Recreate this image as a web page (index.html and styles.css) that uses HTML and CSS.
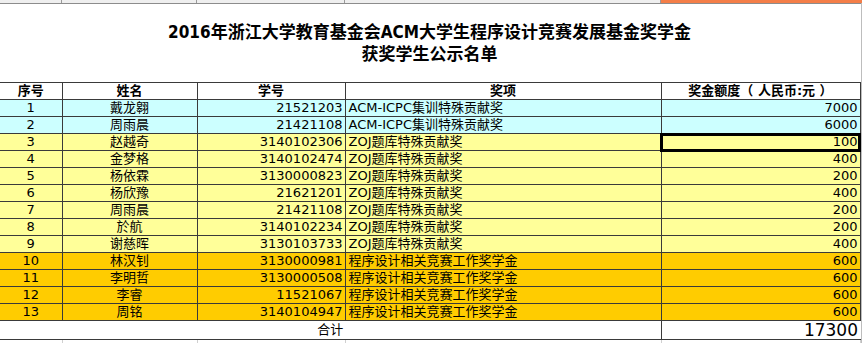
FILE: index.html
```html
<!DOCTYPE html>
<html>
<head>
<meta charset="utf-8">
<link rel="stylesheet" href="styles.css">
</head>
<body>
<div class="sheet">
  <div class="strip">
    <div class="sc"></div><div class="sc"></div><div class="sc"></div><div class="sc"></div><div class="sc active"></div>
  </div>
  <div class="title">
    <div>2016年浙江大学教育基金会ACM大学生程序设计竞赛发展基金奖学金</div>
    <div>获奖学生公示名单</div>
  </div>
  <table class="grid">
    <colgroup>
      <col class="c1"><col class="c2"><col class="c3"><col class="c4"><col class="c5">
    </colgroup>
    <thead>
      <tr class="head"><th>序号</th><th>姓名</th><th>学号</th><th>奖项</th><th>奖金额度（ 人民币:元 ）</th></tr>
    </thead>
    <tbody>
      <tr class="cyan"><td class="ctr">1</td><td class="ctr">戴龙翱</td><td class="num">21521203</td><td class="txt">ACM-ICPC集训特殊贡献奖</td><td class="num">7000</td></tr>
      <tr class="cyan"><td class="ctr">2</td><td class="ctr">周雨晨</td><td class="num">21421108</td><td class="txt">ACM-ICPC集训特殊贡献奖</td><td class="num">6000</td></tr>
      <tr class="yellow"><td class="ctr">3</td><td class="ctr">赵越奇</td><td class="num">3140102306</td><td class="txt">ZOJ题库特殊贡献奖</td><td class="num sel">100</td></tr>
      <tr class="yellow"><td class="ctr">4</td><td class="ctr">金梦格</td><td class="num">3140102474</td><td class="txt">ZOJ题库特殊贡献奖</td><td class="num">400</td></tr>
      <tr class="yellow"><td class="ctr">5</td><td class="ctr">杨依霖</td><td class="num">3130000823</td><td class="txt">ZOJ题库特殊贡献奖</td><td class="num">200</td></tr>
      <tr class="yellow"><td class="ctr">6</td><td class="ctr">杨欣豫</td><td class="num">21621201</td><td class="txt">ZOJ题库特殊贡献奖</td><td class="num">400</td></tr>
      <tr class="yellow"><td class="ctr">7</td><td class="ctr">周雨晨</td><td class="num">21421108</td><td class="txt">ZOJ题库特殊贡献奖</td><td class="num">200</td></tr>
      <tr class="yellow"><td class="ctr">8</td><td class="ctr">於航</td><td class="num">3140102234</td><td class="txt">ZOJ题库特殊贡献奖</td><td class="num">200</td></tr>
      <tr class="yellow"><td class="ctr">9</td><td class="ctr">谢慈晖</td><td class="num">3130103733</td><td class="txt">ZOJ题库特殊贡献奖</td><td class="num">400</td></tr>
      <tr class="gold"><td class="ctr">10</td><td class="ctr">林汉钊</td><td class="num">3130000981</td><td class="txt">程序设计相关竞赛工作奖学金</td><td class="num">600</td></tr>
      <tr class="gold"><td class="ctr">11</td><td class="ctr">李明哲</td><td class="num">3130000508</td><td class="txt">程序设计相关竞赛工作奖学金</td><td class="num">600</td></tr>
      <tr class="gold"><td class="ctr">12</td><td class="ctr">李睿</td><td class="num">11521067</td><td class="txt">程序设计相关竞赛工作奖学金</td><td class="num">600</td></tr>
      <tr class="gold"><td class="ctr">13</td><td class="ctr">周铭</td><td class="num">3140104947</td><td class="txt">程序设计相关竞赛工作奖学金</td><td class="num">600</td></tr>
      <tr class="total"><td colspan="4" class="ctr sum-label">合计</td><td class="num big">17300</td></tr>
      <tr class="after"><td></td><td></td><td></td><td></td><td></td></tr>
    </tbody>
  </table>
</div>
</body>
</html>
```
FILE: styles.css
```css
html, body {
  margin: 0;
  padding: 0;
  background: #ffffff;
}
body {
  font-family: "DejaVu Sans", "Noto Sans CJK SC", sans-serif;
  font-size: 13px;
  color: #000;
  overflow: hidden;
}
.sheet {
  width: 862px;
  height: 343px;
  border-right: 1px solid #bdbdbd;
  box-sizing: border-box;
}
.strip {
  display: grid;
  grid-template-columns: 62px 135px 148px 316px 201px;
  height: 3px;
  border-bottom: 1px solid #8c8c8c;
}
.sc {
  background: #efefef;
  border-right: 1px solid #9a9a9a;
}
.sc.active {
  background: #f47e48;
  border-right: none;
}
.title {
  height: 78px;
  padding-top: 17px;
  box-sizing: border-box;
  text-align: center;
  font-family: "DejaVu Sans Condensed", "Noto Sans CJK SC", sans-serif;
  font-weight: bold;
  font-size: 17px;
  line-height: 22px;
  width: 859px;
}
.grid {
  border-collapse: collapse;
  table-layout: fixed;
  width: 860px;
}
.c1 { width: 62px; }
.c2 { width: 135px; }
.c3 { width: 148px; }
.c4 { width: 316px; }
.c5 { width: 199px; }
.grid th, .grid td {
  border: 1px solid #3a3a3a;
  height: 16px;
  padding: 0 3px;
  line-height: 16px;
  white-space: nowrap;
  overflow: hidden;
}
.grid td:first-child, .grid th:first-child {
  border-left: none;
}
.grid th {
  font-weight: bold;
  background: #fff;
  text-align: center;
}
.head th { height: 16px; }
.ctr { text-align: center; }
.num { text-align: right; }
.txt { text-align: left; }
.cyan td { background: #ccffff; }
.yellow td { background: #ffff99; }
.gold td { background: #ffcc00; }
.grid td.num { padding-right: 2px; }
.grid td.sel {
  outline: 3px solid #000;
  outline-offset: -2px;
}
.total td {
  background: #fff;
  height: 18px;
  line-height: 18px;
  border-left: none;
}
.total td.sum-label { border-right: 1px solid #3a3a3a; }
.total td.big {
  font-size: 17px;
  line-height: 18px;
  border-right: none;
}
.after td {
  height: 4px;
  padding: 0;
  border: none;
  border-right: 1px solid #d0d0d0;
  border-top: 1px solid #3a3a3a;
}
```
